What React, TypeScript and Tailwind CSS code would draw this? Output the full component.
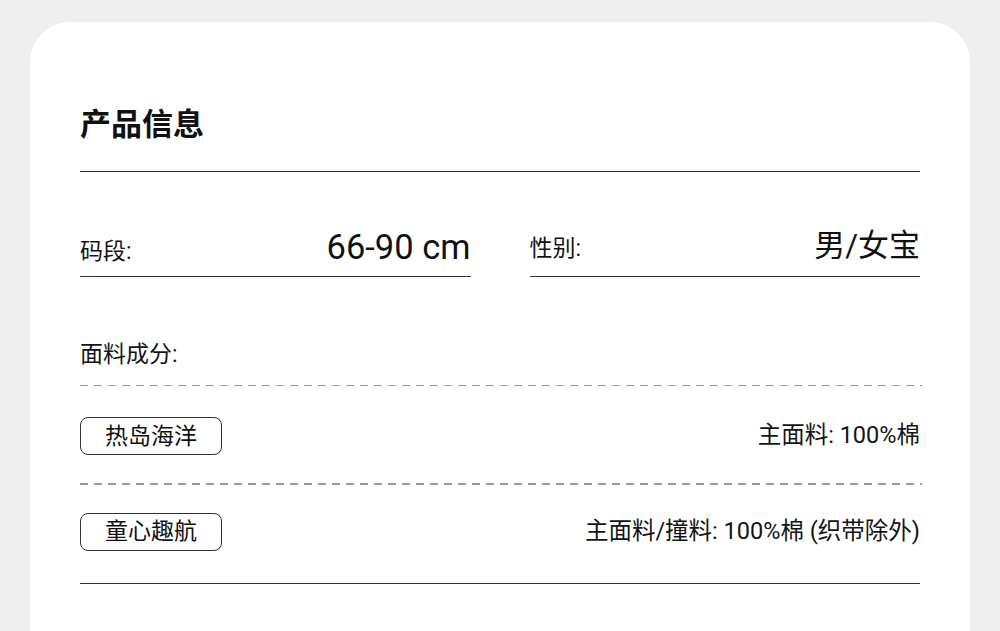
const font = { fontFamily: 'Roboto, "Noto Sans CJK SC", sans-serif' };

function Dashed() {
  return (
    <div className="h-[1.5px] w-[842px] bg-[repeating-linear-gradient(90deg,#999_0,#999_8px,transparent_8px,transparent_14px)]" />
  );
}

function Field({ label, value, valueSize }: { label: string; value: string; valueSize: string }) {
  return (
    <div className="flex items-baseline justify-between border-b border-[#333] pb-[11px]">
      <span className="text-[23px] leading-none text-[#141414]">{label}</span>
      <span className={valueSize + " leading-none text-[#111]"}>{value}</span>
    </div>
  );
}

function FabricRow({ tag, text }: { tag: string; text: string }) {
  return (
    <div className="flex items-center justify-between">
      <span className="flex h-[38px] w-[142px] items-center justify-center rounded-[8px] border border-[#333] text-[23px] leading-none text-[#111]">
        {tag}
      </span>
      <span className="text-[23.5px] leading-none text-[#141414]">{text}</span>
    </div>
  );
}

export default function App() {
  return (
    <div className="h-[631px] overflow-hidden bg-[#eeeeee] px-[30px] pt-[22px]" style={font}>
      <div className="h-[700px] rounded-t-[40px] bg-white px-[50px] pt-[83px]">
        <h2 className="text-[31px] font-bold leading-[40px] text-[#111]">产品信息</h2>
        <div className="mt-[26px] h-px bg-[#333]" />

        <div className="mt-[58px] grid grid-cols-2 gap-[59px]">
          <Field label="码段:" value="66-90 cm" valueSize="text-[34.5px]" />
          <Field label="性别:" value="男/女宝" valueSize="text-[31px]" />
        </div>

        <div className="mt-[66px] text-[23px] leading-none text-[#141414]">面料成分:</div>
        <div className="mt-[19px]">
          <Dashed />
        </div>

        <div className="mt-[31px]">
          <FabricRow tag="热岛海洋" text="主面料: 100%棉" />
        </div>
        <div className="mt-[28px]">
          <Dashed />
        </div>
        <div className="mt-[28px]">
          <FabricRow tag="童心趣航" text="主面料/撞料: 100%棉 (织带除外)" />
        </div>
        <div className="mt-[32px] h-px bg-[#333]" />
      </div>
    </div>
  );
}
